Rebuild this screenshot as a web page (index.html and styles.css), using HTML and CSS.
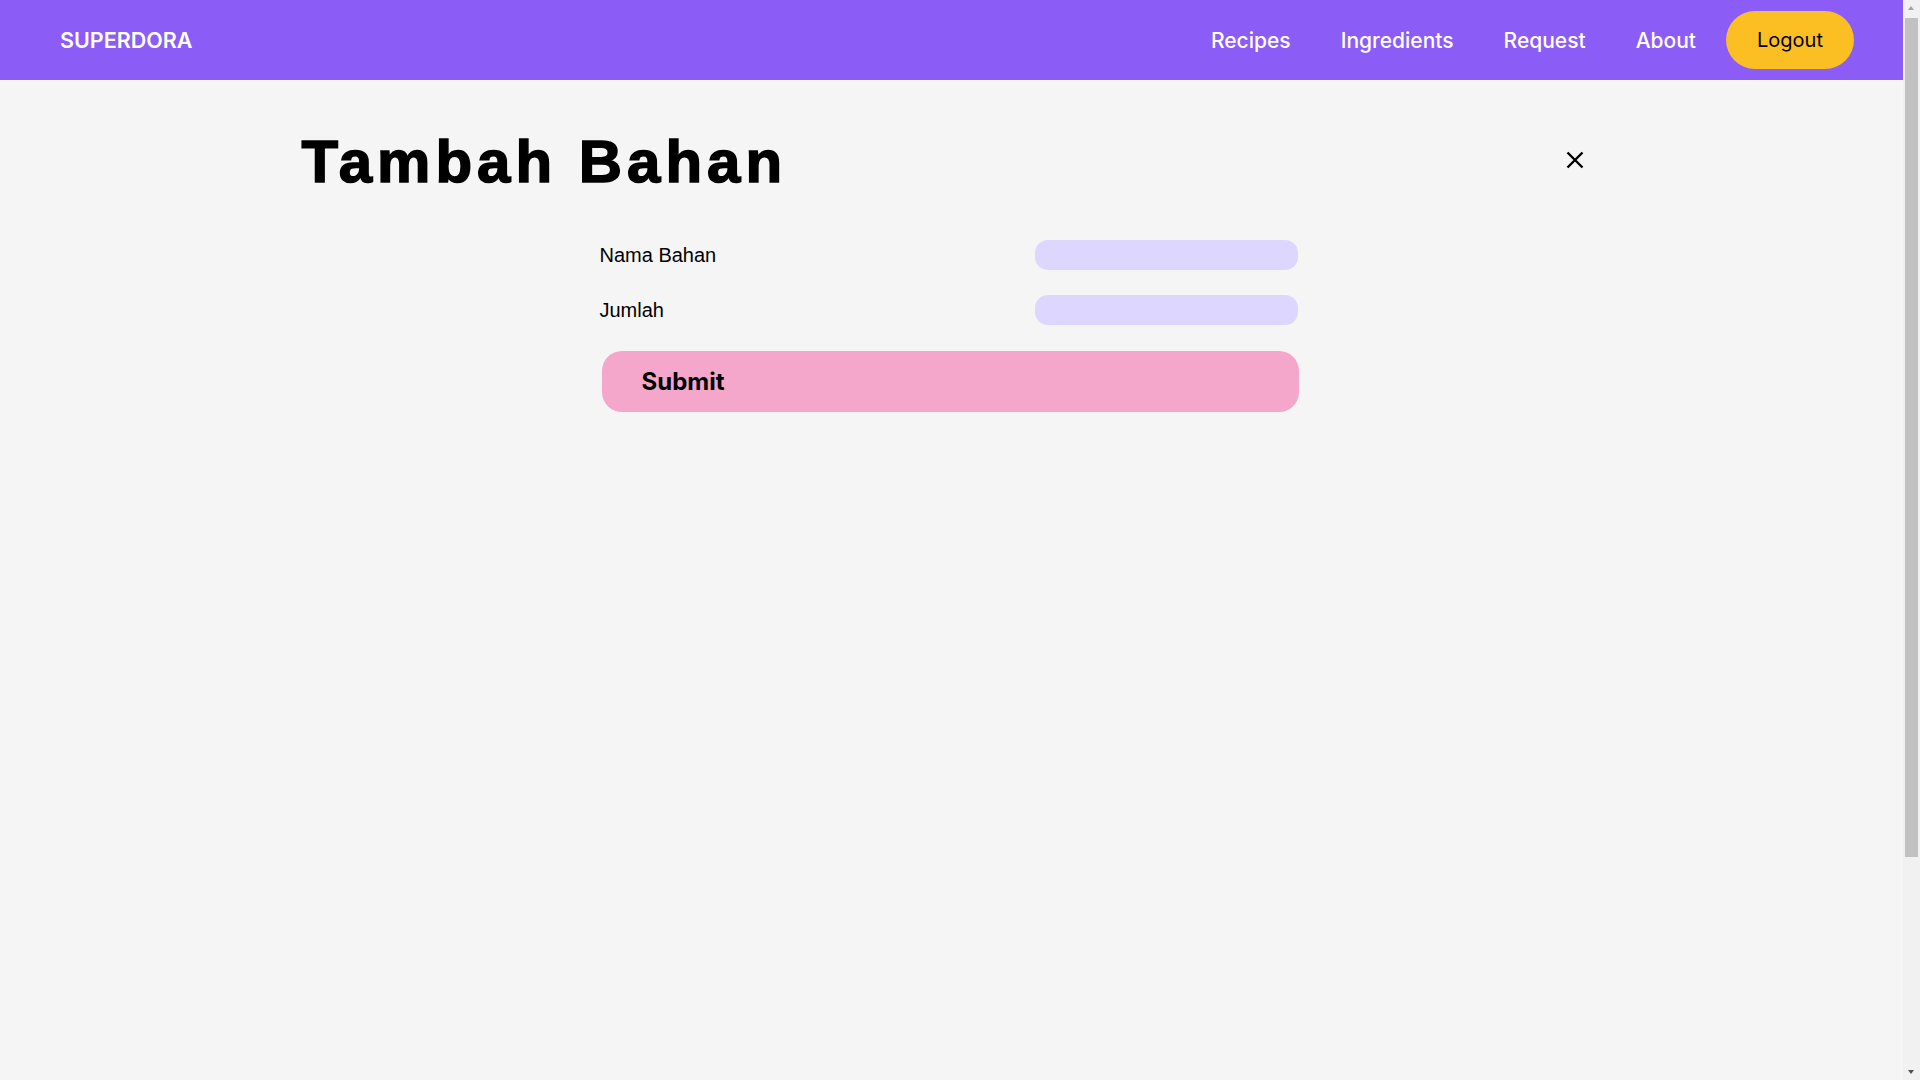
FILE: index.html
```html
<!DOCTYPE html>
<html lang="id">
<head>
<meta charset="utf-8">
<title>Tambah Bahan</title>
<link rel="stylesheet" href="styles.css">
</head>
<body>
<div class="app">
  <nav class="navbar">
    <a class="brand" href="#">SUPERDORA</a>
    <div class="nav-links">
      <a class="nav-link" href="#">Recipes</a>
      <a class="nav-link" href="#">Ingredients</a>
      <a class="nav-link" href="#">Request</a>
      <a class="nav-link nav-link-last" href="#">About</a>
      <a class="logout" href="#">Logout</a>
    </div>
  </nav>
  <main class="page">
    <div class="page-header">
      <h1 class="title">Tambah Bahan</h1>
      <button class="close-btn" type="button" aria-label="Tutup">
        <svg width="18" height="18" viewBox="0 0 18 18" aria-hidden="true">
          <path d="M1.5 1.5 L16.5 16.5 M16.5 1.5 L1.5 16.5" stroke="#000" stroke-width="2.4" fill="none"/>
        </svg>
      </button>
    </div>
    <form class="form">
      <div class="row">
        <label class="label" for="nama">Nama Bahan</label>
        <input class="input" id="nama" type="text">
      </div>
      <div class="row">
        <label class="label" for="jumlah">Jumlah</label>
        <input class="input" id="jumlah" type="text">
      </div>
      <button class="submit" type="button">Submit</button>
    </form>
  </main>
</div>
<div class="scrollbar" aria-hidden="true">
  <div class="sb-arrow sb-up"></div>
  <div class="sb-track"><div class="sb-thumb"></div></div>
  <div class="sb-arrow sb-down"></div>
</div>
</body>
</html>
```
FILE: styles.css
```css
html, body {
  margin: 0;
  padding: 0;
}
body {
  background: #f5f5f5;
  font-family: "Liberation Sans", Arial, sans-serif;
  color: #000;
  overflow: hidden;
}
.app {
  margin-right: 17px;
  min-height: 1080px;
}
.navbar {
  height: 80px;
  background: #8b5cf6;
  display: flex;
  align-items: center;
  justify-content: space-between;
  padding: 0 49px 0 60px;
}
.brand {
  font-family: Inter, "Open Sans", sans-serif;
  font-weight: 600;
  font-size: 21.5px;
  color: #fff;
  text-decoration: none;
}
.nav-links {
  display: flex;
  align-items: center;
}
.nav-link {
  font-family: Inter, "Open Sans", sans-serif;
  font-weight: 500;
  font-size: 21px;
  color: #fff;
  text-decoration: none;
  margin-right: 50px;
}
.nav-link-last {
  margin-right: 30px;
}
.logout {
  display: flex;
  align-items: center;
  justify-content: center;
  width: 128px;
  height: 58px;
  border-radius: 29px;
  background: #fbbf24;
  color: #000;
  font-family: Inter, "Open Sans", sans-serif;
  font-weight: 400;
  font-size: 20px;
  text-decoration: none;
}
.page-header {
  width: 1300px;
  margin: 0 auto;
  padding-top: 52px;
  display: flex;
  justify-content: space-between;
  align-items: flex-start;
}
.title {
  margin: 0;
  font-family: "Liberation Sans", Arial, sans-serif;
  font-weight: 700;
  font-size: 60px;
  line-height: 60px;
  letter-spacing: 5px;
  -webkit-text-stroke: 1.5px #000;
}
.close-btn {
  margin: 19px 18px 0 0;
  padding: 0;
  border: 0;
  background: none;
  width: 18px;
  height: 18px;
  display: block;
  cursor: pointer;
}
.close-btn svg {
  display: block;
}
.form {
  width: 700px;
  margin: 48px auto 0;
  display: flex;
  flex-direction: column;
}
.row {
  display: flex;
  align-items: center;
  height: 30px;
  margin-bottom: 25px;
}
.label {
  font-size: 20px;
  width: 433px;
  margin-left: -2px;
}
.input {
  width: 263px;
  height: 30px;
  box-sizing: border-box;
  border: 0;
  border-radius: 13px;
  background: #ddd6fe;
  margin-left: 2px;
  padding: 0 12px;
  font-size: 16px;
  outline: none;
}
.submit {
  margin-top: 1px;
  width: 697px;
  height: 61px;
  border: 0;
  border-radius: 20px;
  background: #f4a7ca;
  text-align: left;
  padding: 0 0 0 40px;
  font-family: Inter, "Open Sans", sans-serif;
  font-weight: 700;
  font-size: 24px;
  color: #000;
  cursor: pointer;
}
.scrollbar {
  position: fixed;
  top: 0;
  right: 0;
  width: 17px;
  height: 100vh;
  background: #f1f1f1;
  display: flex;
  flex-direction: column;
}
.sb-arrow {
  height: 17px;
  flex: none;
  position: relative;
}
.sb-arrow::after {
  content: "";
  position: absolute;
  left: 5px;
  width: 0;
  height: 0;
  border-left: 3.5px solid transparent;
  border-right: 3.5px solid transparent;
}
.sb-up::after {
  top: 6px;
  border-bottom: 4px solid #a3a3a3;
}
.sb-down::after {
  top: 7px;
  border-top: 4px solid #505050;
}
.sb-track {
  flex: 1;
  padding: 1px 2px 0 2px;
}
.sb-thumb {
  height: 839px;
  background: #c1c1c1;
}
```
